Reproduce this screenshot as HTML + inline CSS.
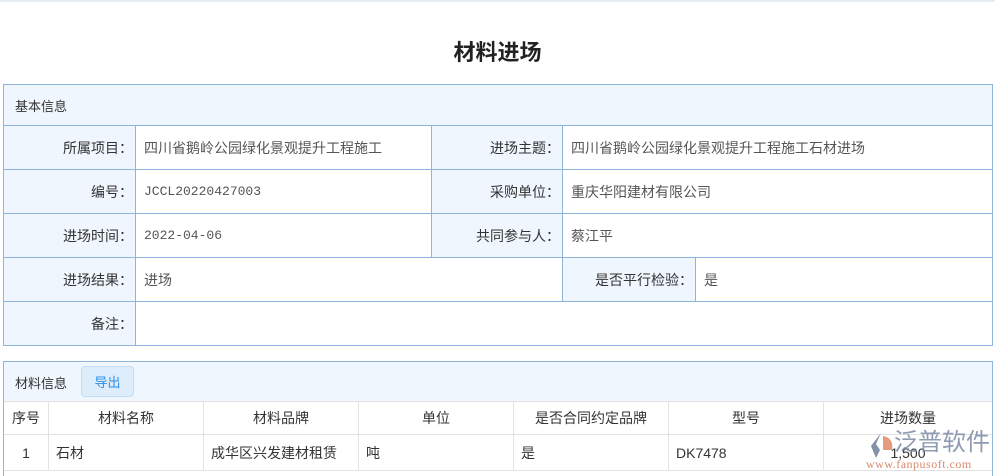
<!DOCTYPE html>
<html><head><meta charset="utf-8"><style>
*{margin:0;padding:0;box-sizing:border-box}
html,body{width:995px;height:476px;overflow:hidden}
body{background:#fff;font-family:"Liberation Sans","Noto Sans CJK SC",sans-serif;position:relative;color:#333}
.a{position:absolute}
.t{left:0;top:0;width:995px;height:2px;background:#e8ecf3}
h1{position:absolute;left:0;width:995px;top:35px;text-align:center;font-size:22px;font-weight:bold;color:#222}
.b{position:absolute;border:1px solid #8db4da}
.c{position:absolute;font-size:14px;display:flex;align-items:center;border-right:1px solid #8db4da;border-bottom:1px solid #8db4da;white-space:nowrap}
.l{background:#f0f6fe;justify-content:flex-end;padding-right:2px;color:#333}
.v{padding-left:8px;color:#555}
.m{font-family:"Liberation Mono","Noto Sans CJK SC",monospace;font-size:13px}
.g{position:absolute;font-size:14px;display:flex;align-items:center;justify-content:center;border-right:1px solid #e2e2e2;border-bottom:1px solid #e2e2e2;color:#333;white-space:nowrap}
.g.s{justify-content:flex-start;padding-left:7px}
</style></head><body>
<div class="a t"></div>
<h1>材料进场</h1>
<div class="b" style="left:3px;top:84px;width:990px;height:262px;border-bottom:none;border-right:none"></div>
<div class="c" style="left:4px;top:85px;width:989px;height:41px;background:#f0f6fe;padding-left:11px;font-size:13px">基本信息</div>

<div class="c l" style="left:4px;top:126px;width:132px;height:44px">所属项目：</div>
<div class="c v" style="left:136px;top:126px;width:296px;height:44px">四川省鹅岭公园绿化景观提升工程施工</div>
<div class="c l" style="left:432px;top:126px;width:131px;height:44px">进场主题：</div>
<div class="c v" style="left:563px;top:126px;width:430px;height:44px">四川省鹅岭公园绿化景观提升工程施工石材进场</div>

<div class="c l" style="left:4px;top:170px;width:132px;height:44px">编号：</div>
<div class="c v m" style="left:136px;top:170px;width:296px;height:44px">JCCL20220427003</div>
<div class="c l" style="left:432px;top:170px;width:131px;height:44px">采购单位：</div>
<div class="c v" style="left:563px;top:170px;width:430px;height:44px">重庆华阳建材有限公司</div>

<div class="c l" style="left:4px;top:214px;width:132px;height:44px">进场时间：</div>
<div class="c v m" style="left:136px;top:214px;width:296px;height:44px">2022-04-06</div>
<div class="c l" style="left:432px;top:214px;width:131px;height:44px">共同参与人：</div>
<div class="c v" style="left:563px;top:214px;width:430px;height:44px">蔡江平</div>

<div class="c l" style="left:4px;top:258px;width:132px;height:44px">进场结果：</div>
<div class="c v" style="left:136px;top:258px;width:427px;height:44px">进场</div>
<div class="c l" style="left:563px;top:258px;width:133px;height:44px">是否平行检验：</div>
<div class="c v" style="left:696px;top:258px;width:297px;height:44px">是</div>

<div class="c l" style="left:4px;top:302px;width:132px;height:44px">备注：</div>
<div class="c v" style="left:136px;top:302px;width:857px;height:44px"></div>

<div class="b" style="left:3px;top:361px;width:990px;height:120px"></div>
<div class="a" style="left:4px;top:362px;width:988px;height:40px;background:#f0f6fe;border-bottom:1px solid #e2e2e2"></div>
<div class="a" style="left:15px;top:373px;font-size:13px">材料信息</div>
<div class="a" style="left:81px;top:366px;width:53px;height:31px;border:1px solid #c6dcf0;border-radius:4px;background:#deedfb;color:#2a8ee8;font-size:13px;display:flex;align-items:center;justify-content:center">导出</div>

<div class="g" style="left:4px;top:402px;width:45px;height:33px">序号</div>
<div class="g" style="left:49px;top:402px;width:155px;height:33px">材料名称</div>
<div class="g" style="left:204px;top:402px;width:155px;height:33px">材料品牌</div>
<div class="g" style="left:359px;top:402px;width:155px;height:33px">单位</div>
<div class="g" style="left:514px;top:402px;width:155px;height:33px">是否合同约定品牌</div>
<div class="g" style="left:669px;top:402px;width:155px;height:33px">型号</div>
<div class="g" style="left:824px;top:402px;width:168px;height:33px;border-right:none">进场数量</div>

<div class="g" style="left:4px;top:435px;width:45px;height:36px">1</div>
<div class="g s" style="left:49px;top:435px;width:155px;height:36px">石材</div>
<div class="g s" style="left:204px;top:435px;width:155px;height:36px">成华区兴发建材租赁</div>
<div class="g s" style="left:359px;top:435px;width:155px;height:36px">吨</div>
<div class="g s" style="left:514px;top:435px;width:155px;height:36px">是</div>
<div class="g s" style="left:669px;top:435px;width:155px;height:36px">DK7478</div>
<div class="g" style="left:824px;top:435px;width:168px;height:36px;border-right:none">1,500</div>

<svg class="a" style="left:866px;top:431px" width="30" height="30" viewBox="0 0 30 30"><path d="M15 2 L5 15 L10 27 L14 19 L10 13 Z" fill="#6e7f98" opacity=".85"/><path d="M17 5 Q28 7 26 19 L17 19 Z" fill="#e08a6a" opacity=".85"/></svg>
<div class="a" style="left:894px;top:430px;font-size:24px;line-height:26px;color:#7b8aa3;opacity:.85;white-space:nowrap">泛普软件</div>
<div class="a" style="left:866px;top:457px;font-size:12px;color:#d88a6c;font-family:'Liberation Serif',serif;white-space:nowrap;letter-spacing:0.5px">www.fanpusoft.com</div>
</body></html>
